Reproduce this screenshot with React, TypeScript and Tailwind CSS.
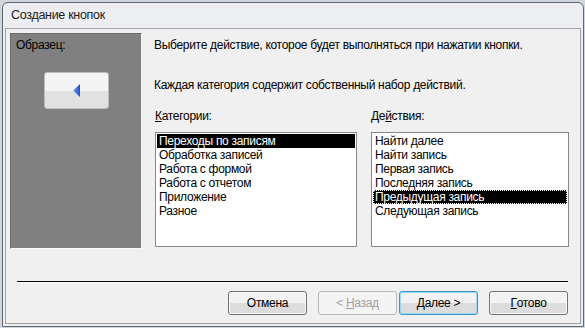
import React from "react";

const font = { fontFamily: '"Liberation Sans", Arial, sans-serif' };

function Btn({ children, variant }: { children: React.ReactNode; variant?: "disabled" | "default" }) {
  const base = "h-[24px] w-[79px] rounded-[3px] border flex items-center justify-center text-[12px]";
  if (variant === "disabled") {
    return (
      <div className={base + " border-[#b5b9bd] bg-[#f4f4f4] text-[#a0a0a0]"}>{children}</div>
    );
  }
  if (variant === "default") {
    return (
      <div className={base + " border-[#3399cc] bg-gradient-to-b from-[#f2f2f2] from-50% to-[#dcdcdc] to-50% text-black shadow-[inset_0_0_0_1px_#9ed7f0]"}>
        {children}
      </div>
    );
  }
  return (
    <div className={base + " border-[#707070] bg-gradient-to-b from-[#f2f2f2] from-50% to-[#dcdcdc] to-50% text-black shadow-[inset_0_0_0_1px_#fbfbfb]"}>
      {children}
    </div>
  );
}

export default function App() {
  const cats = [
    "Переходы по записям",
    "Обработка записей",
    "Работа с формой",
    "Работа с отчетом",
    "Приложение",
    "Разное",
  ];
  const acts = [
    "Найти далее",
    "Найти запись",
    "Первая запись",
    "Последняя запись",
    "Предыдущая запись",
    "Следующая запись",
  ];
  return (
    <div style={font} className="w-[585px] h-[328px] bg-[#cfd6de] pt-[2px] pl-[2px] pr-[1px] pb-[1px] text-[12px] tracking-[-0.3px] text-black">
      <div className="h-full flex flex-col border border-[#63686e] rounded-t-[6px] bg-[#eceef1] px-[2px] pb-[2px]">
        <div className="h-[25px] flex items-center pl-[6px] text-[12.5px] text-[#1a1a1a]">Создание кнопок</div>
        <div className="flex-1 border border-[#a3a3a3] bg-[#f0f0f0] pt-[4px] pl-[4px] flex flex-col">
          <div className="flex">
            <div className="w-[132px] h-[216px] bg-[#808080] border-l border-t border-[#6a6a6a] border-r border-b border-r-[#f8f8f8] border-b-[#f8f8f8] flex flex-col pl-[5px] pt-[4px]">
              <div className="leading-[14px]">Образец:</div>
              <div className="ml-[28px] mt-[20px] w-[65px] h-[37px] rounded-[3px] border border-[#bdbdbd] bg-gradient-to-b from-[#f4f4f4] from-50% to-[#e1e1e1] to-50% flex items-center justify-center">
                <svg width="8" height="13" viewBox="0 0 8 13">
                  <defs>
                    <linearGradient id="tg" x1="0" y1="0" x2="1" y2="0">
                      <stop offset="0" stopColor="#6fa3f0" />
                      <stop offset="1" stopColor="#1f4fc6" />
                    </linearGradient>
                  </defs>
                  <polygon points="7,0 7,13 0,6.5" fill="url(#tg)" />
                </svg>
              </div>
            </div>
            <div className="ml-[12px] flex flex-col">
              <div className="mt-[5px] leading-[14px]">Выберите действие, которое будет выполняться при нажатии кнопки.</div>
              <div className="mt-[26px] leading-[14px]">Каждая категория содержит собственный набор действий.</div>
              <div className="mt-[17px] flex leading-[14px]">
                <div className="w-[217px] pl-[1px]"><u>К</u>атегории:</div>
                <div>Де<u>й</u>ствия:</div>
              </div>
              <div className="mt-[9px] flex">
                <div className="ml-[1px] w-[202px] h-[115px] border border-[#828790] bg-white p-[1px]">
                  {cats.map((c, i) => (
                    <div key={c} className={"h-[14px] leading-[14px] pl-[2px] " + (i === 0 ? "bg-black text-white" : "")}>{c}</div>
                  ))}
                </div>
                <div className="ml-[14px] w-[198px] h-[115px] border border-[#828790] bg-white p-[1px]">
                  {acts.map((c, i) => (
                    <div key={c} className={"h-[14px] leading-[12px] pl-[1px] " + (i === 4 ? "bg-black text-white border border-dotted border-white" : "border border-transparent")}>{c}</div>
                  ))}
                </div>
              </div>
            </div>
          </div>
          <div className="mt-[32px] ml-[7px] mr-[12px] h-[2px] border-t border-black border-b border-b-white"></div>
          <div className="mt-[8px] flex pl-[218px]">
            <Btn>Отмена</Btn>
            <div className="ml-[11px]"><Btn variant="disabled">&lt;&nbsp;<u>Н</u>азад</Btn></div>
            <div className="ml-[2px]"><Btn variant="default"><u>Д</u>алее&nbsp;&gt;</Btn></div>
            <div className="ml-[11px]"><Btn><u>Г</u>отово</Btn></div>
          </div>
        </div>
      </div>
    </div>
  );
}
